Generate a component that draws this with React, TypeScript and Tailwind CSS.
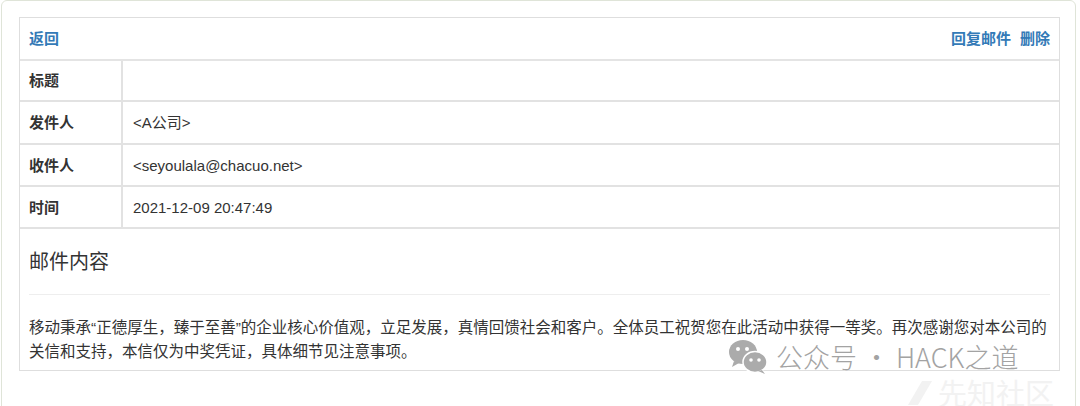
import React from "react";

const font = { fontFamily: '"Liberation Sans", Arial, "Noto Sans CJK SC", sans-serif' };

function Row({ label, value, h }: { label: string; value?: string; h: string }) {
  return (
    <div className={`flex ${h} border-b-2 border-[#e2e2e2]`}>
      <div className="w-[103px] border-r-2 border-[#e2e2e2] pl-[9px] pt-[2px] flex items-center font-bold text-[15px] text-[#333]">
        {label}
      </div>
      <div className="flex-1 pl-[10px] pt-[2px] flex items-center text-[15px] text-[#333]">{value}</div>
    </div>
  );
}

export default function App() {
  return (
    <div className="w-[1080px] h-[406px] bg-white relative overflow-hidden" style={font}>
      <div className="ml-[1px] w-[1075px] h-[430px] border border-[#dfe4d8] rounded-[6px] pt-[16px] pl-[17px]">
        <div className="w-[1041px] border border-[#dedede] bg-white">
          <div className="flex h-[43px] items-center justify-between px-[9px] pt-[1px] border-b-2 border-[#e4e4e4] text-[15px] font-bold text-[#337ab7]">
            <span>返回</span>
            <span className="flex gap-[9px]">
              <span>回复邮件</span>
              <span>删除</span>
            </span>
          </div>
          <Row label="标题" h="h-[41px]" />
          <Row label="发件人" value="<A公司>" h="h-[43px]" />
          <Row label="收件人" value="<seyoulala@chacuo.net>" h="h-[42px]" />
          <Row label="时间" value="2021-12-09 20:47:49" h="h-[42px]" />
          <div className="px-[9px] pt-[21px] pb-[6px] text-[#333]">
            <div className="text-[20px] leading-[24px] h-[24px]">邮件内容</div>
            <div className="mt-[20px] border-t border-[#eeeeee]" />
            <p className="mt-[21px] text-[15.5px] leading-[24px]">
              移动秉承“正德厚生，臻于至善”的企业核心价值观，立足发展，真情回馈社会和客户。全体员工祝贺您在此活动中获得一等奖。再次感谢您对本公司的
              <br />
              关信和支持，本信仅为中奖凭证，具体细节见注意事项。
            </p>
          </div>
        </div>
      </div>

      {/* watermark */}
      <div className="absolute left-[728px] top-[339px] flex items-center gap-[8px] text-[#a3a3a3]">
        <svg width="40" height="36" viewBox="0 0 40 36">
          <ellipse cx="15" cy="13" rx="14" ry="12" fill="#ababab" />
          <path d="M6 22 L4 28 L11 24 Z" fill="#ababab" />
          <circle cx="10" cy="10" r="2" fill="#fff" />
          <circle cx="19" cy="10" r="2" fill="#fff" />
          <ellipse cx="27" cy="23" rx="12" ry="10.5" fill="#ababab" stroke="#fff" strokeWidth="1.5" />
          <path d="M34 31 L37 35 L30 32 Z" fill="#ababab" />
          <circle cx="23" cy="21" r="1.8" fill="#fff" />
          <circle cx="31" cy="21" r="1.8" fill="#fff" />
        </svg>
        <span className="text-[27px] leading-[36px]" style={{ fontFamily: '"Noto Sans CJK SC", "Noto Sans", sans-serif', fontWeight: 300 }}>
          公众号 · HACK之道
        </span>
      </div>
      <div className="absolute left-[906px] top-[376px] flex items-center gap-[4px] text-[#f2f2f2]">
        <svg width="28" height="30" viewBox="0 0 28 30">
          <path d="M2 28 L16 4 L26 4 L12 28 Z" fill="#f2f2f2" />
        </svg>
        <span className="text-[29px] leading-[32px]" style={{ fontFamily: '"Noto Sans CJK SC", sans-serif' }}>
          先知社区
        </span>
      </div>
    </div>
  );
}
